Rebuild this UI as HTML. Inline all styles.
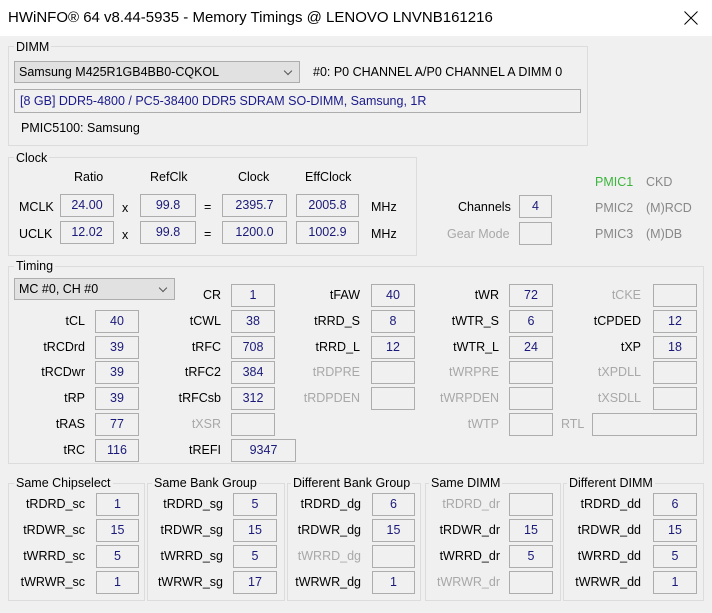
<!DOCTYPE html><html><head><style>
*{margin:0;padding:0;box-sizing:border-box}
body{width:712px;height:613px;background:#f0f0f0;font-family:"Liberation Sans",sans-serif;font-size:12.5px;color:#000;position:relative;overflow:hidden}
div{position:absolute;white-space:nowrap}
.t{left:0;top:0;width:712px;height:36px;background:#fff}
.g{border:1px solid #dcdcdc}
.gl{background:#f0f0f0;padding:0 2px;line-height:14px}
.l{width:120px;text-align:right;line-height:22px}
.b{height:23px;border:1px solid #adadad;text-align:center;line-height:21px;color:#1a1a78;background:#f0f0f0}
.d{color:#a8a8a8}
.c{border:1px solid #adadad;background:#e1e1e1;height:22px;line-height:20px;padding-left:4px}
.c:after{content:"";position:absolute;right:8px;top:6px;width:5px;height:5px;border-right:1px solid #555;border-bottom:1px solid #555;transform:rotate(45deg)}
</style></head><body>
<div class="t"><div style="left:8px;top:9px;font-size:15px;color:#000">HWiNFO® 64 v8.44-5935 - Memory Timings @ LENOVO LNVNB161216</div>
<svg style="position:absolute;left:684px;top:11px" width="14" height="14" viewBox="0 0 14 14"><path d="M0.5 0.5L13.5 13.5M13.5 0.5L0.5 13.5" stroke="#000" stroke-width="1"/></svg></div>

<div class="g" style="left:8px;top:46px;width:580px;height:100px"></div>
<div class="gl" style="left:14px;top:40px">DIMM</div>
<div class="c" style="left:14px;top:61px;width:286px">Samsung M425R1GB4BB0-CQKOL</div>
<div style="left:313px;top:65px">#0: P0 CHANNEL A/P0 CHANNEL A DIMM 0</div>
<div style="left:14px;top:89px;width:567px;height:24px;border:1px solid #adadad;line-height:22px;padding-left:5px;color:#1a1a8a">[8 GB] DDR5-4800 / PC5-38400 DDR5 SDRAM SO-DIMM, Samsung, 1R</div>
<div style="left:21px;top:121px">PMIC5100: Samsung</div>

<div class="g" style="left:8px;top:157px;width:409px;height:99px"></div>
<div class="gl" style="left:14px;top:151px">Clock</div>
<div style="left:74px;top:170px">Ratio</div><div style="left:150px;top:170px">RefClk</div><div style="left:238px;top:170px">Clock</div><div style="left:305px;top:170px">EffClock</div>
<div style="left:19px;top:200px">MCLK</div><div style="left:19px;top:227px">UCLK</div>
<div class="b" style="left:60px;top:194px;width:54px">24.00</div><div class="b" style="left:60px;top:221px;width:54px">12.02</div>
<div style="left:122px;top:201px">x</div><div style="left:122px;top:228px">x</div>
<div class="b" style="left:140px;top:194px;width:56px">99.8</div><div class="b" style="left:140px;top:221px;width:56px">99.8</div>
<div style="left:204px;top:200px">=</div><div style="left:204px;top:227px">=</div>
<div class="b" style="left:222px;top:194px;width:65px">2395.7</div><div class="b" style="left:222px;top:221px;width:65px">1200.0</div>
<div class="b" style="left:296px;top:194px;width:63px">2005.8</div><div class="b" style="left:296px;top:221px;width:63px">1002.9</div>
<div style="left:371px;top:200px">MHz</div><div style="left:371px;top:227px">MHz</div>
<div style="left:458px;top:200px">Channels</div><div class="b" style="left:519px;top:195px;width:33px">4</div>
<div class="d" style="left:447px;top:227px">Gear Mode</div><div class="b" style="left:519px;top:222px;width:33px"></div>
<div style="left:595px;top:175px;color:#3cb43c">PMIC1</div><div class="d" style="left:646px;top:175px;color:#888">CKD</div>
<div style="left:595px;top:201px;color:#888">PMIC2</div><div style="left:646px;top:201px;color:#888">(M)RCD</div>
<div style="left:595px;top:227px;color:#888">PMIC3</div><div style="left:646px;top:227px;color:#888">(M)DB</div>

<div class="g" style="left:8px;top:266px;width:696px;height:198px"></div>
<div class="gl" style="left:14px;top:259px">Timing</div>
<div class="c" style="left:14px;top:278px;width:161px">MC #0, CH #0</div>

<div class="l" style="left:-35px;top:310px">tCL</div><div class="b" style="left:95px;top:310px;width:44px">40</div>
<div class="l" style="left:-35px;top:336px">tRCDrd</div><div class="b" style="left:95px;top:336px;width:44px">39</div>
<div class="l" style="left:-35px;top:361px">tRCDwr</div><div class="b" style="left:95px;top:361px;width:44px">39</div>
<div class="l" style="left:-35px;top:387px">tRP</div><div class="b" style="left:95px;top:387px;width:44px">39</div>
<div class="l" style="left:-35px;top:413px">tRAS</div><div class="b" style="left:95px;top:413px;width:44px">77</div>
<div class="l" style="left:-35px;top:439px">tRC</div><div class="b" style="left:95px;top:439px;width:44px">116</div>

<div class="l" style="left:101px;top:284px">CR</div><div class="b" style="left:231px;top:284px;width:44px">1</div>
<div class="l" style="left:101px;top:310px">tCWL</div><div class="b" style="left:231px;top:310px;width:44px">38</div>
<div class="l" style="left:101px;top:336px">tRFC</div><div class="b" style="left:231px;top:336px;width:44px">708</div>
<div class="l" style="left:101px;top:361px">tRFC2</div><div class="b" style="left:231px;top:361px;width:44px">384</div>
<div class="l" style="left:101px;top:387px">tRFCsb</div><div class="b" style="left:231px;top:387px;width:44px">312</div>
<div class="l d" style="left:101px;top:413px">tXSR</div><div class="b" style="left:231px;top:413px;width:44px"></div>
<div class="l" style="left:101px;top:439px">tREFI</div><div class="b" style="left:231px;top:439px;width:65px">9347</div>

<div class="l" style="left:240px;top:284px">tFAW</div><div class="b" style="left:371px;top:284px;width:44px">40</div>
<div class="l" style="left:240px;top:310px">tRRD_S</div><div class="b" style="left:371px;top:310px;width:44px">8</div>
<div class="l" style="left:240px;top:336px">tRRD_L</div><div class="b" style="left:371px;top:336px;width:44px">12</div>
<div class="l d" style="left:240px;top:361px">tRDPRE</div><div class="b" style="left:371px;top:361px;width:44px"></div>
<div class="l d" style="left:240px;top:387px">tRDPDEN</div><div class="b" style="left:371px;top:387px;width:44px"></div>

<div class="l" style="left:379px;top:284px">tWR</div><div class="b" style="left:509px;top:284px;width:44px">72</div>
<div class="l" style="left:379px;top:310px">tWTR_S</div><div class="b" style="left:509px;top:310px;width:44px">6</div>
<div class="l" style="left:379px;top:336px">tWTR_L</div><div class="b" style="left:509px;top:336px;width:44px">24</div>
<div class="l d" style="left:379px;top:361px">tWRPRE</div><div class="b" style="left:509px;top:361px;width:44px"></div>
<div class="l d" style="left:379px;top:387px">tWRPDEN</div><div class="b" style="left:509px;top:387px;width:44px"></div>
<div class="l d" style="left:379px;top:413px">tWTP</div><div class="b" style="left:509px;top:413px;width:44px"></div>

<div class="l d" style="left:521px;top:284px">tCKE</div><div class="b" style="left:653px;top:284px;width:44px"></div>
<div class="l" style="left:521px;top:310px">tCPDED</div><div class="b" style="left:653px;top:310px;width:44px">12</div>
<div class="l" style="left:521px;top:336px">tXP</div><div class="b" style="left:653px;top:336px;width:44px">18</div>
<div class="l d" style="left:521px;top:361px">tXPDLL</div><div class="b" style="left:653px;top:361px;width:44px"></div>
<div class="l d" style="left:521px;top:387px">tXSDLL</div><div class="b" style="left:653px;top:387px;width:44px"></div>
<div class="d" style="left:561px;top:417px">RTL</div><div class="b" style="left:592px;top:413px;width:105px"></div>

<div class="g" style="left:8px;top:483px;width:137px;height:118px"></div><div class="gl" style="left:14px;top:476px">Same Chipselect</div>
<div class="g" style="left:147px;top:483px;width:138px;height:118px"></div><div class="gl" style="left:152px;top:476px">Same Bank Group</div>
<div class="g" style="left:287px;top:483px;width:134px;height:118px"></div><div class="gl" style="left:291px;top:476px">Different Bank Group</div>
<div class="g" style="left:425px;top:483px;width:136px;height:118px"></div><div class="gl" style="left:429px;top:476px">Same DIMM</div>
<div class="g" style="left:563px;top:483px;width:141px;height:118px"></div><div class="gl" style="left:567px;top:476px">Different DIMM</div>

<div class="l" style="left:-35px;top:493px">tRDRD_sc</div><div class="b" style="left:96px;top:493px;width:43px">1</div>
<div class="l" style="left:-35px;top:519px">tRDWR_sc</div><div class="b" style="left:96px;top:519px;width:43px">15</div>
<div class="l" style="left:-35px;top:545px">tWRRD_sc</div><div class="b" style="left:96px;top:545px;width:43px">5</div>
<div class="l" style="left:-35px;top:571px">tWRWR_sc</div><div class="b" style="left:96px;top:571px;width:43px">1</div>

<div class="l" style="left:103px;top:493px">tRDRD_sg</div><div class="b" style="left:233px;top:493px;width:44px">5</div>
<div class="l" style="left:103px;top:519px">tRDWR_sg</div><div class="b" style="left:233px;top:519px;width:44px">15</div>
<div class="l" style="left:103px;top:545px">tWRRD_sg</div><div class="b" style="left:233px;top:545px;width:44px">5</div>
<div class="l" style="left:103px;top:571px">tWRWR_sg</div><div class="b" style="left:233px;top:571px;width:44px">17</div>

<div class="l" style="left:241px;top:493px">tRDRD_dg</div><div class="b" style="left:372px;top:493px;width:43px">6</div>
<div class="l" style="left:241px;top:519px">tRDWR_dg</div><div class="b" style="left:372px;top:519px;width:43px">15</div>
<div class="l d" style="left:241px;top:545px">tWRRD_dg</div><div class="b" style="left:372px;top:545px;width:43px"></div>
<div class="l" style="left:241px;top:571px">tWRWR_dg</div><div class="b" style="left:372px;top:571px;width:43px">1</div>

<div class="l d" style="left:380px;top:493px">tRDRD_dr</div><div class="b" style="left:509px;top:493px;width:44px"></div>
<div class="l" style="left:380px;top:519px">tRDWR_dr</div><div class="b" style="left:509px;top:519px;width:44px">15</div>
<div class="l" style="left:380px;top:545px">tWRRD_dr</div><div class="b" style="left:509px;top:545px;width:44px">5</div>
<div class="l d" style="left:380px;top:571px">tWRWR_dr</div><div class="b" style="left:509px;top:571px;width:44px"></div>

<div class="l" style="left:521px;top:493px">tRDRD_dd</div><div class="b" style="left:653px;top:493px;width:44px">6</div>
<div class="l" style="left:521px;top:519px">tRDWR_dd</div><div class="b" style="left:653px;top:519px;width:44px">15</div>
<div class="l" style="left:521px;top:545px">tWRRD_dd</div><div class="b" style="left:653px;top:545px;width:44px">5</div>
<div class="l" style="left:521px;top:571px">tWRWR_dd</div><div class="b" style="left:653px;top:571px;width:44px">1</div>
</body></html>
